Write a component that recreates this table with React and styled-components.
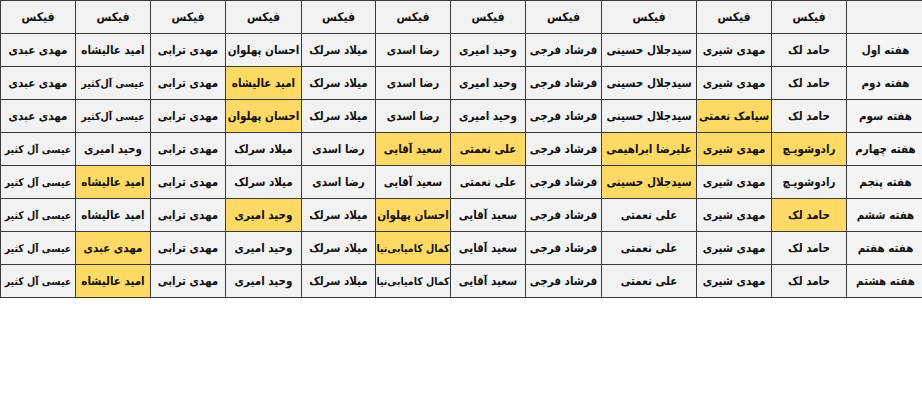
import React from "react";
import styled, { createGlobalStyle } from "styled-components";

const GlobalStyle = createGlobalStyle`
  html, body {
    margin: 0;
    padding: 0;
    background: #ffffff;
  }
  body {
    font-family: "DejaVu Sans Condensed", "DejaVu Sans", sans-serif;
  }
`;

// widths from right to left (table is rtl)
const colWidths = [78, 75, 75, 95, 76, 75, 75, 74, 76, 75, 75, 75];

// names that are too long for a narrow column
const longNames = ["کمال کامیابی‌نیا", "عیسی آل کثیر", "عیسی آل‌کثیر"];

const weeks = [
  {
    label: "هفته اول",
    cells: ["حامد لک", "مهدی شیری", "سیدجلال حسینی", "فرشاد فرجی", "وحید امیری", "رضا اسدی", "میلاد سرلک", "احسان پهلوان", "مهدی ترابی", "امید عالیشاه", "مهدی عبدی"],
    marked: [],
  },
  {
    label: "هفته دوم",
    cells: ["حامد لک", "مهدی شیری", "سیدجلال حسینی", "فرشاد فرجی", "وحید امیری", "رضا اسدی", "میلاد سرلک", "امید عالیشاه", "مهدی ترابی", "عیسی آل‌کثیر", "مهدی عبدی"],
    marked: [7],
  },
  {
    label: "هفته سوم",
    cells: ["حامد لک", "سیامک نعمتی", "سیدجلال حسینی", "فرشاد فرجی", "وحید امیری", "رضا اسدی", "میلاد سرلک", "احسان پهلوان", "مهدی ترابی", "عیسی آل‌کثیر", "مهدی عبدی"],
    marked: [1, 7],
  },
  {
    label: "هفته چهارم",
    cells: ["رادوشویـچ", "مهدی شیری", "علیرضا ابراهیمی", "فرشاد فرجی", "علی نعمتی", "سعید آقایی", "رضا اسدی", "میلاد سرلک", "مهدی ترابی", "وحید امیری", "عیسی آل کثیر"],
    marked: [0, 1, 2, 4, 5],
  },
  {
    label: "هفته پنجم",
    cells: ["رادوشویـچ", "مهدی شیری", "سیدجلال حسینی", "فرشاد فرجی", "علی نعمتی", "سعید آقایی", "رضا اسدی", "میلاد سرلک", "مهدی ترابی", "امید عالیشاه", "عیسی آل کثیر"],
    marked: [2, 9],
  },
  {
    label: "هفته ششم",
    cells: ["حامد لک", "مهدی شیری", "علی نعمتی", "فرشاد فرجی", "سعید آقایی", "احسان پهلوان", "میلاد سرلک", "وحید امیری", "مهدی ترابی", "امید عالیشاه", "عیسی آل کثیر"],
    marked: [0, 5, 7],
  },
  {
    label: "هفته هفتم",
    cells: ["حامد لک", "مهدی شیری", "علی نعمتی", "فرشاد فرجی", "سعید آقایی", "کمال کامیابی‌نیا", "میلاد سرلک", "وحید امیری", "مهدی ترابی", "مهدی عبدی", "عیسی آل کثیر"],
    marked: [5, 9],
  },
  {
    label: "هفته هشتم",
    cells: ["حامد لک", "مهدی شیری", "علی نعمتی", "فرشاد فرجی", "سعید آقایی", "کمال کامیابی‌نیا", "میلاد سرلک", "وحید امیری", "مهدی ترابی", "امید عالیشاه", "عیسی آل کثیر"],
    marked: [9],
  },
];

const App = () => {
  return (
    <Page>
      <GlobalStyle />
      <Schedule dir="rtl">
        <colgroup>
          {colWidths.map((w, i) => (
            <Col key={i} $w={w} />
          ))}
        </colgroup>
        <thead>
          <tr>
            <HeadCell />
            {Array.from({ length: 11 }).map((_, i) => (
              <HeadCell key={i}>فیکس</HeadCell>
            ))}
          </tr>
        </thead>
        <tbody>
          {weeks.map((week) => (
            <tr key={week.label}>
              <WeekCell>{week.label}</WeekCell>
              {week.cells.map((name, i) => (
                <Cell
                  key={i}
                  $marked={week.marked.includes(i)}
                  $long={longNames.includes(name)}
                >
                  {name}
                </Cell>
              ))}
            </tr>
          ))}
        </tbody>
      </Schedule>
    </Page>
  );
};

const Page = styled.div`
  width: 922px;
  height: 410px;
  overflow: hidden;
  background: #fff;
`;

const Schedule = styled.table`
  border-collapse: collapse;
  table-layout: fixed;
  width: 924px;
  direction: rtl;
`;

const Col = styled.col`
  width: ${(p) => p.$w}px;
`;

const baseCell = `
  height: 32px;
  padding: 0;
  border: 1px solid #3a3a3a;
  text-align: center;
  vertical-align: middle;
  font-family: "DejaVu Sans Condensed", "DejaVu Sans", sans-serif;
  font-weight: bold;
  font-size: 11.5px;
  color: #111;
  white-space: nowrap;
  overflow: hidden;
`;

const HeadCell = styled.th`
  ${baseCell}
  font-size: 12px;
  background: #f2f2f2;
`;

const WeekCell = styled.td`
  ${baseCell}
  background: #f5f5f5;
`;

const Cell = styled.td`
  ${baseCell}
  font-size: ${(p) => (p.$long ? "10.5px" : "11.5px")};
  letter-spacing: ${(p) => (p.$long ? "-0.2px" : "0")};
  background: ${(p) => (p.$marked ? "#ffd966" : "#f2f2f2")};
`;

export default App;
